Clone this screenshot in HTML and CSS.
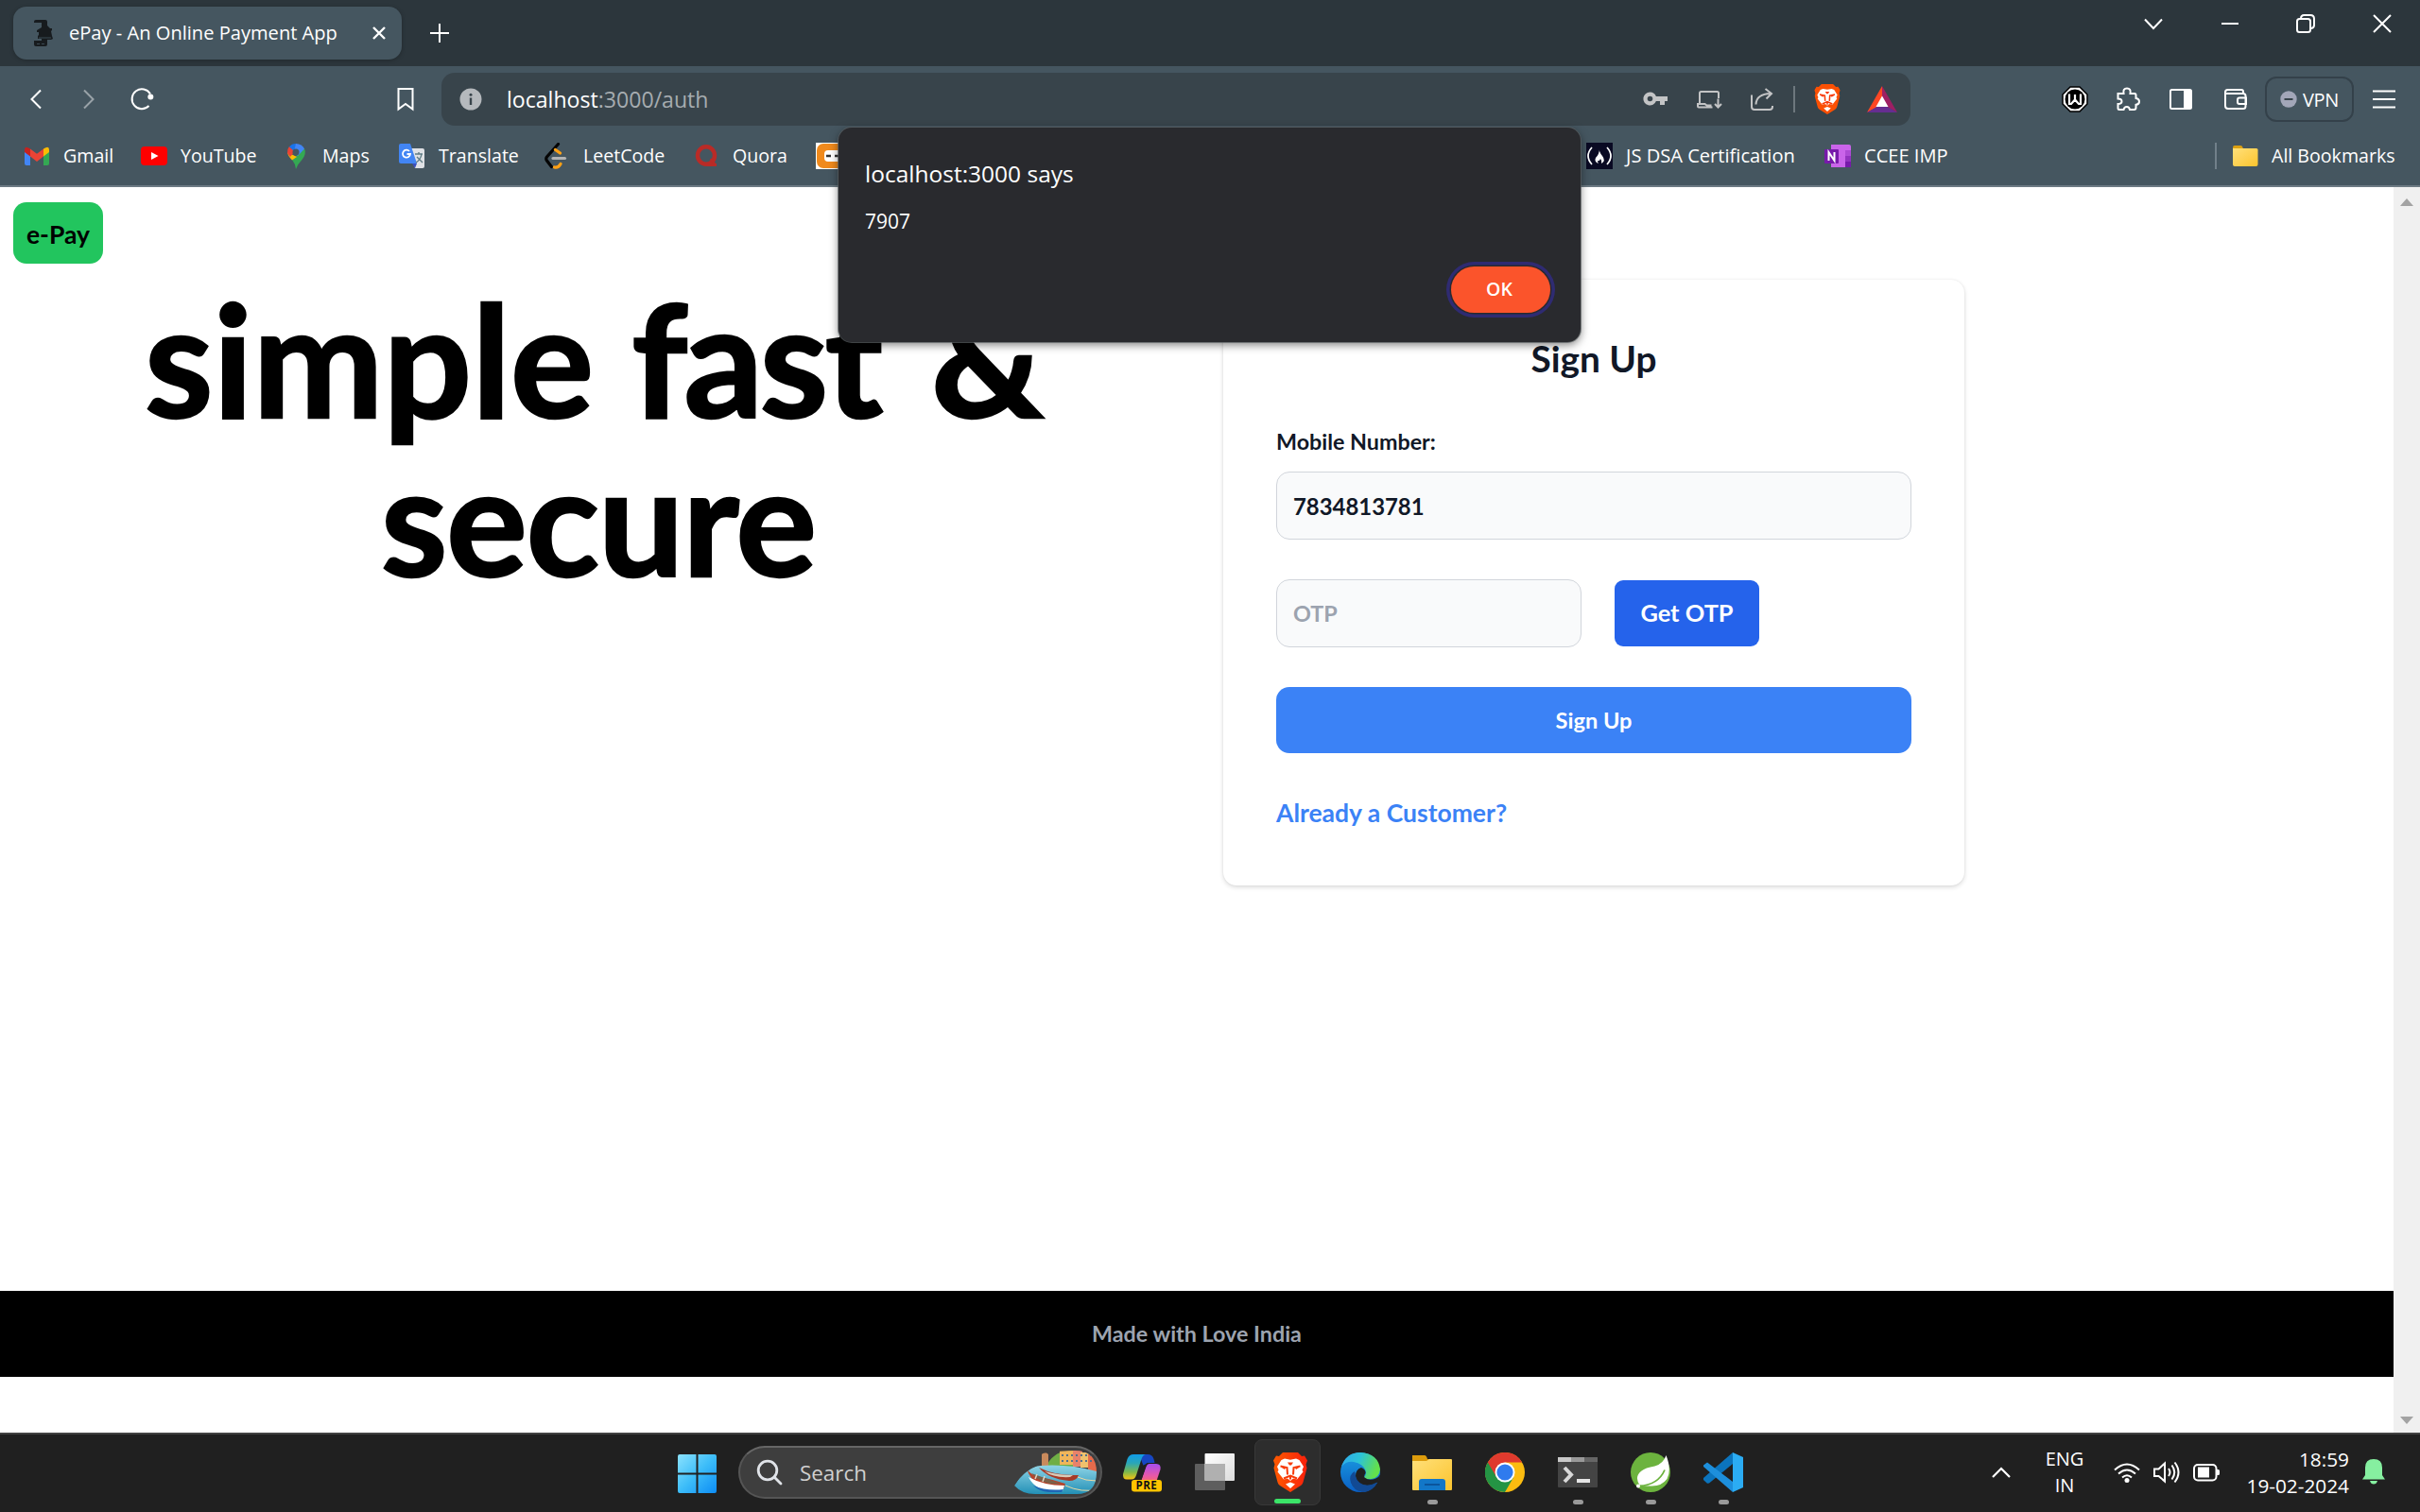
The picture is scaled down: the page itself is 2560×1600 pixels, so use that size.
FILE: index.html
```html
<!DOCTYPE html>
<html lang="en">
<head>
<meta charset="utf-8">
<title>ePay - An Online Payment App</title>
<link rel="stylesheet" href="styles.css">
</head>
<body>
<svg class="defs" width="0" height="0" aria-hidden="true">
  <defs>
    <linearGradient id="win" x1="0" y1="0" x2="1" y2="1"><stop offset="0" stop-color="#8be2fd"/><stop offset=".5" stop-color="#3dbdf9"/><stop offset="1" stop-color="#0c8cf4"/></linearGradient>
    <linearGradient id="lion" x1="0" y1="0" x2="1" y2="0"><stop offset="0" stop-color="#ff5a00"/><stop offset="1" stop-color="#f8200c"/></linearGradient>
    <linearGradient id="copA" x1="0" y1="0" x2="0" y2="1"><stop offset="0" stop-color="#0f9be8"/><stop offset=".35" stop-color="#2aa6b8"/><stop offset=".7" stop-color="#7cb84c"/><stop offset="1" stop-color="#f6c413"/></linearGradient>
    <linearGradient id="copB" x1="0" y1="0" x2="0" y2="1"><stop offset="0" stop-color="#a64df0"/><stop offset=".6" stop-color="#e858a8"/><stop offset="1" stop-color="#f9705c"/></linearGradient>
    <linearGradient id="edgeA" x1="0" y1="0" x2="1" y2=".3"><stop offset="0" stop-color="#2fa8ee"/><stop offset=".5" stop-color="#2cc3d6"/><stop offset="1" stop-color="#63e04d"/></linearGradient>
    <linearGradient id="edgeB" x1="0" y1="0" x2="0" y2="1"><stop offset="0" stop-color="#1b9de2"/><stop offset="1" stop-color="#0a5fc4"/></linearGradient>
    <linearGradient id="fold" x1="0" y1="0" x2="1" y2="1"><stop offset="0" stop-color="#ffe07a"/><stop offset="1" stop-color="#fcc42e"/></linearGradient>
    <linearGradient id="sea" x1="0" y1="0" x2="0" y2="1"><stop offset="0" stop-color="#8fd4e6"/><stop offset="1" stop-color="#2390b6"/></linearGradient>
    <linearGradient id="paper" x1="0" y1="0" x2="1" y2="1"><stop offset="0" stop-color="#ffffff"/><stop offset="1" stop-color="#dcdcdc"/></linearGradient>
    <symbol id="lionhead" viewBox="0 0 36 42">
      <path d="M10 0h16l4 4 3-.5 3 5-1.500 4 1 4-4 15q-.6 2-2.500 3.500L18 42 7 35q-2-1.500-2.500-3.500L.5 16.500l1-4L0 8.500l3-5 3 .5z"/>
      <path fill="#fff" d="M12 6.500l6 1.200 6-1.200 3.500 1.500 4.500 7-1.500 3.500 1 2-6.500 8-4-1-3 2.500-3-2.500-4 1-6.500-8 1-2L4 15l4.500-7zM18 31.500l5 2-5 4.500-5-4.500z"/>
      <path fill="none" stroke="#f83a08" stroke-width="2" d="M7.500 14.500l7 1.500.5 7.500M28.500 14.500l-7 1.500-.5 7.500M11 27.500l7-3 7 3M18 24.500v4"/>
      <path fill="#f83a08" d="M8 15.500l5 .5-1 2zM28 15.500l-5 .5 1 2zM15 10.500h6l-2 3h-2z"/>
    </symbol>
  </defs>
</svg>

<header class="browser">
  <div class="tabstrip">
    <div class="tab">
      <svg class="tab-icon" viewBox="0 0 22 28"><path fill="#171b1e" d="M1 2q0-2 2-2h10q2 0 2 2v4l3 3h2v2l-1 1 1 5 1 3-2 1h-4v5q0 2-2 2H3q-2 0-2-2v-4h8v-2H5v-3l1-1v-3H4v-2l5-3V3H1z"/><path stroke="#455660" stroke-width=".8" d="M4 25.500h3M9 25.500h3M6 19h13"/></svg>
      <span class="tab-title">ePay - An Online Payment App</span>
      <svg class="tab-close" viewBox="0 0 14 14"><path d="M1 1l12 12M13 1L1 13"/></svg>
    </div>
    <svg class="tab-new" viewBox="0 0 20 20"><path d="M10 0v20M0 10h20"/></svg>
    <div class="window-buttons">
      <svg class="ico" viewBox="0 0 28 28"><path d="M5 9.500l9 9.500 9-9.500"/></svg>
      <svg class="ico" viewBox="0 0 28 28"><path d="M5 14h18"/></svg>
      <svg class="ico" viewBox="0 0 28 28"><rect x="5" y="9" width="14" height="14" rx="2.500"/><path d="M9 8.500Q9 5 12.500 5H19q4 0 4 4v6.500q0 3-3 3.500"/></svg>
      <svg class="ico" viewBox="0 0 28 28"><path d="M5 5l18 18M23 5L5 23"/></svg>
    </div>
  </div>

  <div class="toolbar">
    <div class="nav">
      <svg class="ico" viewBox="0 0 28 28"><path d="M19 4.500L9.500 14l9.500 9.500"/></svg>
      <svg class="ico dim" viewBox="0 0 28 28"><path d="M9 4.500l9.500 9.500L9 23.500"/></svg>
      <svg class="ico" viewBox="0 0 28 28"><path d="M21.500 21A10.400 10.400 0 1 1 23 8.500"/><circle cx="23.300" cy="11.500" r="3" fill="#fff" stroke="none"/></svg>
    </div>
    <svg class="ico mark" viewBox="0 0 28 28"><path d="M6.500 3h15v21.500L14 19l-7.500 5.500z"/></svg>
    <div class="omnibox">
      <svg class="info" viewBox="0 0 24 24"><circle cx="12" cy="12" r="11.500" fill="#b5b9bd"/><path d="M12 10.500V18" stroke="#38444b" stroke-width="2.400"/><circle cx="12" cy="7.300" r="1.500" fill="#38444b"/></svg>
      <span class="url"><span class="host">localhost</span>:3000/auth</span>
      <div class="omni-actions">
        <svg class="ico gray" viewBox="0 0 28 28"><g fill="#c3c4c5" stroke="none"><path fill-rule="evenodd" d="M8.500 6.500a7 7 0 0 1 6.400 4.500H27v5h-3v4h-5v-4h-4.100A7 7 0 1 1 8.500 6.500zm0 4.200a2.800 2.800 0 1 0 0 5.600 2.800 2.800 0 0 0 0-5.600z"/></g></svg>
        <svg class="ico gray" viewBox="0 0 28 28"><path d="M4 19V7.500Q4 6 5.500 6h17Q24 6 24 7.500V13M17.500 22.500H3q-1 0-1-1V19h7.500l2 1.500h5M23.500 13.500V22M20 19l3.500 3.500L27 19"/></svg>
        <svg class="ico gray" viewBox="0 0 28 28"><path d="M3 9.500V22q0 3 3 3h16q3 0 3-3v-1M7.500 19.500Q8 8.500 23 8M17.500 3l6.500 5-5.500 5.500"/></svg>
        <span class="bar"></span>
        <svg class="shield" viewBox="0 0 36 42" fill="#fb5004"><use href="#lionhead"/></svg>
        <svg class="bat" viewBox="0 0 32 28"><path fill="#ff4724" d="M16 0L0 28l11-6 5-10z"/><path fill="#9e1f63" d="M16 0l16 28-11-6-5-10z"/><path fill="#662d91" d="M0 28h32l-10.500-6h-11z"/><path fill="#fff" d="M16 10.500L9.500 22h13z"/></svg>
      </div>
    </div>
    <div class="extensions">
      <svg class="ico" viewBox="0 0 28 28"><path d="M9 1h10l8 8v10l-8 8H9l-8-8V9z" fill="#fff" stroke="#000" stroke-width="1.500"/><circle cx="14" cy="14" r="10.500" fill="#000" stroke="none"/><path d="M8 8.500V19h2l4-4.500 4 4.500h2V8.500M14 9v5" stroke-width="2.200"/></svg>
      <svg class="ico" viewBox="0 0 28 28"><path d="M3.500 8h6q-1-5.500 3.500-5.500T16.500 8H21q1.500 0 1.500 1.500V13q3.500.5 3.500 3.500t-3.500 3.300V23q0 2-2 2h-4.500q-.5-3-3.200-3T9.500 25H5q-1.500 0-1.500-1.500V19q4 0 4-2.800T3.500 13.500z"/></svg>
      <svg class="ico" viewBox="0 0 28 28"><rect x="3" y="4" width="22" height="20" rx="1.500"/><path fill="#fff" stroke="none" d="M17 4h8v20h-8z"/></svg>
      <svg class="ico" viewBox="0 0 28 28"><path d="M22 8V6q0-2-2-2H5.500Q3 4 3 6.500V21q0 3 3 3h16q2.500 0 2.500-2.500v-11Q24.500 8 22 8H3M25 12.500h-7q-2 0-2 2v2.500q0 2 2 2h7z"/></svg>
      <div class="vpn"><svg viewBox="0 0 18 18"><circle cx="9" cy="9" r="8.700" fill="#a2a6b8"/><path d="M4.500 9h9" stroke="#38444b" stroke-width="2"/></svg>VPN</div>
      <svg class="ico" viewBox="0 0 28 28"><path d="M2 5.500h24M2 14h24M2 22.500h24"/></svg>
    </div>
  </div>

  <nav class="bookmarks">
    <a><svg viewBox="0 0 28 28"><path fill="#4285f4" d="M1 9l6 4.500V24H3q-2 0-2-2z"/><path fill="#34a853" d="M21 13.500L27 9v13q0 2-2 2h-4z"/><path fill="#fbbc04" d="M21 6.500q6-4 6 1V10l-6 4.500z"/><path fill="#c5221f" d="M1 10V7.500q0-5 6-1v8z"/><path fill="#ea4335" d="M7 6.500l7 5.300 7-5.300v8L14 20l-7-5.500z"/></svg>Gmail</a>
    <a><svg viewBox="0 0 28 28"><rect y="4" width="28" height="20" rx="4" fill="#f00"/><path fill="#fff" d="M11 10l7.500 4L11 18z"/></svg>YouTube</a>
    <a><svg viewBox="0 0 28 28"><path fill="#34a853" d="M14 28q-.7-6-4-10L23 6q2.500 6-2.500 12Q15.500 23 14 28z"/><path fill="#fbbc04" d="M10 18.500Q5.500 14 5 10l6 3 4 2z"/><path fill="#ea4335" d="M5 11q-.5-4 2-7l6 5-5 6z"/><path fill="#1a73e8" d="M7 4.300Q10 .5 15 1l-2 9z"/><path fill="#4285f4" d="M14 .9q6.500.3 9 5.600L16 14l-4-4z"/><circle cx="14" cy="10" r="3.500" fill="#455660"/></svg>Maps</a>
    <a><svg viewBox="0 0 28 28"><path fill="#dfe1e5" d="M12 6h13q2 0 2 2v17q0 2-2 2H17z"/><path fill="#4285f4" d="M2 1h10l7 21H2q-2 0-2-2V3q0-2 2-2z"/><path fill="#3a4fbe" d="M14 22h5l-2 5z"/><path d="M17 12h8M21 10v2M24 12q-1 6-6 9M19 15l6 6" stroke="#5f7c85" stroke-width="1.400" fill="none"/><path d="M11 9a4 4 0 1 0 1 3H8.500" stroke="#fff" stroke-width="1.800" fill="none"/></svg>Translate</a>
    <a><svg viewBox="0 0 28 28" fill="none" stroke-width="3.200" stroke-linecap="round"><path stroke="#050505" d="M15.500 1.500L3.500 15q-1.500 2 0 4l5 6.500"/><path stroke="#ffa116" d="M12.500 7.500l5 3.500M11.500 26q4 1 6.500-3.500"/><path stroke="#b3b3b3" d="M10 16.500h12.500"/></svg>LeetCode</a>
    <a><svg viewBox="0 0 28 28" fill="none" stroke="#b92b27" stroke-width="4.500"><ellipse cx="14" cy="13.500" rx="9" ry="9.200"/><path stroke-width="3" d="M15 23.500h10M19 17l4 6"/></svg>Quora</a>
    <a><svg viewBox="0 0 28 28"><path fill="#fff" d="M0 0h28v28H0z"/><rect x="1" y="1" width="30" height="26" rx="7" fill="#f08a1c"/><rect x="9" y="8" width="24" height="12" rx="4" fill="#fff"/><path stroke="#333" stroke-width="2.500" d="M11 14h5M20 14h5"/></svg></a>
    <a class="wide"><svg viewBox="0 0 28 28"><path fill="#0a0a23" d="M0 0h28v28H0z"/><path d="M6 5q-8 9 0 18M22 5q8 9 0 18" stroke="#fff" stroke-width="1.700" fill="none"/><path fill="#fff" d="M14 6q-1 3 3 8 4 5-1 8 1-3-1-5-1 3-3 2 0 2 1 3-5-2-3-6 4-4 4-10z"/></svg>JS DSA Certification</a>
    <a class="wide"><svg viewBox="0 0 28 28"><path fill="#ca64ea" d="M7 2h19q2 0 2 2v22H7z"/><path fill="#ae4bd5" d="M22 8h6v6h-6z"/><path fill="#9332bf" d="M22 14h6v6h-6z"/><path fill="#7719aa" d="M22 20h6v6h-6zM1 7h13q1 0 1 1v13q0 1-1 1H1q-1 0-1-1V8q0-1 1-1z"/><path d="M4.500 19v-9l6 9v-9" stroke="#fff" stroke-width="2" fill="none"/></svg>CCEE IMP</a>
    <a class="all"><svg viewBox="0 0 28 28"><path fill="#dba011" d="M1 5q0-2 2-2h6q2 0 2.500 2l1 3H1z"/><path fill="url(#fold)" d="M1 6h25q1.500 0 1.500 1.500V23q0 2-2 2H3q-2 0-2-2z"/></svg>All Bookmarks</a>
  </nav>
</header>

<div class="viewport">
  <div class="page">
    <div class="topbar"><a class="logo">e-Pay</a></div>
    <main class="columns">
      <h1 class="hero"><span class="line-one">simple <span class="tight">fast</span> &amp;</span><br><span class="line-two">secure</span></h1>
      <form class="card">
        <h2>Sign Up</h2>
        <label>Mobile Number:</label>
        <div class="field">7834813781</div>
        <div class="otp-row">
          <div class="field hint">OTP</div>
          <div class="get-otp">Get OTP</div>
        </div>
        <div class="submit">Sign Up</div>
        <a class="switch">Already a Customer?</a>
      </form>
    </main>
    <footer class="footer">Made with Love India</footer>
  </div>
  <div class="scrollbar">
    <svg viewBox="0 0 14 8"><path d="M7 0l7 8H0z"/></svg>
    <svg viewBox="0 0 14 8"><path d="M0 0h14L7 8z"/></svg>
  </div>
</div>

<div class="dialog">
  <p class="dialog-title">localhost:3000 says</p>
  <p class="dialog-text">7907</p>
  <div class="dialog-ok">OK</div>
</div>

<div class="taskbar">
  <div class="apps">
    <svg class="start" viewBox="0 0 41 41"><path fill="url(#win)" d="M2 0h17.500v19.500H0V2q0-2 2-2zM21.500 0H39q2 0 2 2v17.500H21.500zM0 21.500h19.500V41H2q-2 0-2-2zM21.500 21.500H41V39q0 2-2 2H21.500z"/></svg>
    <div class="search">
      <svg class="lens" viewBox="0 0 28 28"><circle cx="12" cy="12" r="9.800"/><path d="M19 19l7 7"/></svg>
      <span>Search</span>
      <svg class="harbor" viewBox="0 0 87 46">
        <defs><clipPath id="hc"><path d="M0 37Q9 22 26 15L29 3Q50 0 64 0 87 0 87 23T66 46H22Q8 46 0 37z"/></clipPath></defs>
        <g clip-path="url(#hc)">
          <path fill="#6fae45" d="M34 18q2-8 8-12 6-6 20-5v17z"/>
          <path fill="#c98a5c" d="M29 4l3.500-3L36 4v12h-7z"/>
          <path fill="#f0b65a" d="M48 0h15v15H48z"/><path fill="#e8826a" d="M62 0h10v17H62z"/><path fill="#efc16d" d="M70 2h9v16h-9z"/><path fill="#e46b4c" d="M78 4h9v18h-9z"/>
          <path stroke="#53708c" stroke-width="2" stroke-dasharray="2 3" d="M50 5h36M50 11h36"/>
          <path fill="url(#sea)" d="M0 37Q12 17 28 16q30-2 59 6v24H0z"/>
          <path fill="#a63a28" d="M26 18q18 9 42 8-2 6-10 6-22-2-32-14z"/><path fill="#d8cbb9" d="M32 22q14 4 30 4l-3 2q-18 1-27-6z"/>
          <path fill="#b5442c" d="M13 19q5 8 15 9 14 3 26 7l-2 6Q20 42 13 19z"/><path fill="#fff" d="M15 28q16 9 38 9l-2 6Q24 46 15 28z"/><path fill="#1f66b5" d="M20 37q14 6 32 4l-2 3H36q-10-1-16-7z"/>
          <path fill="#7c6048" d="M18 24q14 5 31 11-20 2-31-11z"/><path d="M24 25l-2 5M32 27l-2 6" stroke="#e2d6c5" stroke-width="1.500"/>
          <path d="M54 37q18 8 33 4M67 28q8 4 20 4" stroke="#e9d9a4" fill="none"/>
        </g>
      </svg>
    </div>
    <div class="app"><svg viewBox="0 0 42 42"><path fill="#1746c2" d="M18 2h9q5 0 6.500 5l1 4h-8l-4 3z"/><path fill="url(#copA)" d="M12 2h13q-3 .5-4.500 5L15 24q-1.500 4.500-5 4.500H5Q.5 28.500 1 23L5.500 7Q7.500 2 12 2z"/><path fill="url(#copB)" d="M29 12h7q5.500 0 4.500 6l-4 12q-1 3-5 3H19l6-17q1.500-4 4-4z"/><path fill="#202020" d="M19 18l4-5h3l-5.500 16H13q3-1 4-5z"/><rect x="10" y="29" width="32" height="12.500" rx="3" fill="#ffc400"/></svg><span class="pre">PRE</span></div>
    <div class="app"><svg viewBox="0 0 42 42"><rect y="12" width="32" height="28" rx="1" fill="#5e5e5e"/><rect x="10.500" y="1" width="31.500" height="29" rx="1" fill="url(#paper)"/><path fill="#b0b0b0" d="M10.500 12H32v18H10.500z"/></svg></div>
    <div class="app active"><svg viewBox="0 0 42 42"><svg x="3" width="36" height="42" viewBox="0 0 36 42" fill="url(#lion)"><use href="#lionhead"/></svg></svg></div>
    <div class="app"><svg viewBox="0 0 42 42"><circle cx="21" cy="21" r="21" fill="url(#edgeB)"/><path fill="#124a94" d="M15 20q-7 4-4 12 4 8 14 10 9-1 14-10-6 3-13 1-10-3-11-13z"/><path fill="url(#edgeA)" d="M1 15Q6 0 21 0q19 1 21 18-1 9-9 10-7 1-8-2 3-3 1.500-7Q24 12 14 10 6 9 1 15z"/><path fill="#202020" d="M16 25q0-7 6-9 5 2 4.500 6-2 3-1 4.500 5 4 12 1 3-1 5-5-1 6-3 9-10 5-18 2-5-3-5.500-8.500z"/><path fill="#124a94" d="M16 25q2 9 13 10 5 0 10-3-5 8-14 10-12-1-14-11z"/></svg></div>
    <div class="app open"><svg viewBox="0 0 42 42"><path fill="#dd9c0c" d="M0 3h13q2 0 3 4h8v8H0z"/><path fill="url(#fold)" d="M0 9h15l3-2h23q1 0 1 1v31q0 1-1 1H1q-1 0-1-1z"/><path fill="#1277c8" d="M7 40V31q0-3 3-3h22q3 0 3 3v9z"/><path stroke="#0b549c" stroke-width="2" d="M13 34h16"/></svg></div>
    <div class="app"><svg viewBox="0 0 42 42"><circle cx="21" cy="21" r="21" fill="#fbbc10"/><path fill="#249444" d="M2.800 10.500A21 21 0 0 0 21 42l9-15.500L21 21z"/><path fill="#df3a2e" d="M2.800 10.500A21 21 0 0 1 39.200 10.500H21L12 26z"/><circle cx="21" cy="21" r="10.500" fill="#fff"/><circle cx="21" cy="21" r="8.600" fill="#2f7bee"/></svg></div>
    <div class="app open"><svg viewBox="0 0 42 42"><rect y="5" width="42" height="32" rx="1" fill="#444"/><path fill="#c8c8c8" d="M0 5h14v5H0z"/><path fill="#999" d="M14 5h14v5H14z"/><path fill="#666" d="M28 5h14v5H28z"/><path d="M7 16l7 7.500L7 31" stroke="#d8d8d8" stroke-width="4" fill="none"/><path fill="#e6e6e6" d="M20 28h14v4H20z"/></svg></div>
    <div class="app open"><svg viewBox="0 0 42 42"><circle cx="21" cy="21" r="21" fill="#6cb33e"/><path fill="#fff" d="M37.500 3q6 15 1 25-6 8-17 7.500-8 0-12-1-6-9 2-15 4-3.500 14-5 9-2.500 12-11.500z"/><path d="M9 35.500q20-1 27-17" stroke="#6cb33e" stroke-width="1.800" fill="none"/><circle cx="8" cy="35.500" r="2" fill="#fff"/></svg></div>
    <div class="app open"><svg viewBox="0 0 42 42"><path fill="#0b74bd" d="M31 0v12L6 32.500l-2 .2L0 29v-2z"/><path fill="#1d8fdc" d="M4 10.500L31 31v11L0 15v-1.500z"/><path fill="#2bacf3" d="M31 0l11 5v32l-11 5z"/></svg></div>
  </div>
  <div class="tray">
    <svg class="up" viewBox="0 0 20 12"><path d="M1 11l9-9 9 9"/></svg>
    <div class="lang">ENG<br>IN</div>
    <svg class="sys" viewBox="0 0 28 28"><path d="M1 11.500q13-12 26 0M5 15.500q9-8 18 0M9 19.500q5-4.500 10 0"/><circle cx="14" cy="22.500" r="2.500" fill="#fff" stroke="none"/></svg>
    <svg class="sys" viewBox="0 0 28 28"><path d="M1 10.500h4.500L12 4.500v19l-6.500-5.500H1zM16 10q3 4 0 8M19.500 6.500q5.500 7.500 0 15M22.500 3.500q8 10.500 0 21"/></svg>
    <svg class="sys" viewBox="0 0 28 28"><rect x="1" y="6" width="23.500" height="16.500" rx="4"/><path fill="#fff" stroke="none" d="M5 8.500h12v11H5zM25 11h1.500q1.500 0 1.500 1.500v3q0 1.500-1.500 1.500H25z"/></svg>
    <div class="clock">18:59<br>19-02-2024</div>
    <svg class="bell" viewBox="0 0 24 27"><path d="M12 0q9 0 9 9v8l3 4.500H0L3 17V9q0-9 9-9zM8 23h8q-1 3.500-4 3.500T8 23z"/></svg>
  </div>
</div>
</body>
</html>
```

FILE: styles.css
```css
* { box-sizing: border-box; margin: 0; padding: 0; }

body {
  width: 2560px;
  height: 1600px;
  display: flex;
  flex-direction: column;
  position: relative;
  overflow: hidden;
  background: #fff;
  font-family: "Open Sans", "Noto Sans", sans-serif;
}

.defs { position: absolute; }
svg { display: block; flex: none; }

.ico { width: 28px; height: 28px; fill: none; stroke: #fff; stroke-width: 2; }
.ico.gray { stroke: #c3c4c5; }
.ico.dim { opacity: .45; }

/* Browser frame */
.browser { flex: none; height: 198px; background: #455660; border-bottom: 2px solid #6c7a83; color: #fff; }

.tabstrip { height: 70px; display: flex; align-items: center; padding-left: 14px; background: #2c363c; }
.tab { width: 411px; height: 56px; border-radius: 14px; background: #455660; display: flex; align-items: center; padding: 0 17px 0 21px; box-shadow: 0 1px 4px rgba(0, 0, 0, .25); }
.tab-icon { width: 22px; height: 28px; margin-right: 16px; }
.tab-title { flex: 1; font-size: 20.1px; white-space: nowrap; padding-bottom: 1px; }
.tab-close { width: 14px; height: 14px; fill: none; stroke: #fff; stroke-width: 2.4; }
.tab-new { width: 20px; height: 20px; margin-left: 30px; stroke: #fff; stroke-width: 2; }
.window-buttons { margin-left: auto; height: 70px; padding-top: 11px; display: grid; grid-template-columns: repeat(4, 80.5px); justify-items: center; }

.toolbar { height: 70px; display: flex; align-items: center; }
.nav { display: flex; padding-left: 24px; gap: 28px; }
.mark { margin-left: 251px; }
.omnibox { margin-left: 24px; width: 1554px; height: 56px; border-radius: 14px; background: #38444b; display: flex; align-items: center; padding-left: 19px; }
.info { width: 24px; height: 24px; }
.url { margin-left: 26px; font-size: 23.1px; color: #a6acb0; letter-spacing: 0; padding-bottom: 1px; }
.host { color: #fff; }
.omni-actions { margin-left: auto; display: grid; grid-template-columns: 56px 57px 56px 12px 57px 60px; align-items: center; justify-items: center; }
.bar { width: 2px; height: 28px; background: #6d777d; }
.shield { width: 28px; height: 32px; }
.bat { width: 32px; height: 28px; }
.extensions { margin-left: auto; display: grid; grid-template-columns: 55px 56px 56px 60px 94px 64px; align-items: center; justify-items: center; padding-right: 6px; }
.extensions > .ico:not(:last-child) { margin-right: 3px; }
.vpn { width: 94px; height: 48px; border: 2px solid #34414a; border-radius: 12px; display: flex; align-items: center; justify-content: center; gap: 6px; font-size: 20px; letter-spacing: -.3px; }
.vpn svg { width: 18px; height: 18px; }

.bookmarks { height: 50px; padding-left: 25px; display: grid; grid-template-columns: 124px 150px 123px 153px 158px 130px 815px 252px 413px 1fr; align-items: center; }
.bookmarks a { display: flex; align-items: center; height: 28px; line-height: 26px; gap: 14px; font-size: 19.6px; white-space: nowrap; }
.bookmarks .wide { font-size: 20.1px; }
.bookmarks svg { width: 28px; height: 28px; }
.all { height: 28px; border-left: 2px solid #71808a; padding-left: 16px; }

/* Web page */
.viewport { flex: 1; display: flex; min-height: 0; }
.page { width: 2532px; display: flex; flex-direction: column; font-family: Lato, "Open Sans", sans-serif; font-weight: 700; }
.topbar { padding: 16px 14px 0; }
.logo { display: inline-flex; align-items: center; justify-content: center; width: 95px; height: 65px; border-radius: 14px; background: #22c55e; color: #000; font-size: 26.5px; padding-top: 2px; }
.columns { height: 1087px; display: grid; grid-template-columns: 1266px 1fr; align-items: start; }
.hero { padding: 15px 0 0 0; text-align: center; font-size: 164.9px; line-height: 168px; color: #000; -webkit-text-stroke: 2.5px #000; }
.line-one { padding-right: 9px; }
.tight { letter-spacing: -3.500px; margin-right: 14px; }
.line-two { font-size: 160px; letter-spacing: -1px; }
.card { margin: 17px 0 0 28px; width: 784px; height: 641px; border-radius: 14px; padding: 56px; background: #fff; box-shadow: 0 2px 5px rgba(0, 0, 0, .14), 0 0 2px rgba(0, 0, 0, .08); color: #111827; display: flex; flex-direction: column; }
.card h2 { text-align: center; font-size: 38.8px; line-height: 55px; height: 56px; }
.card label { margin-top: 42px; font-size: 23.3px; line-height: 35px; }
.field { margin-top: 14px; height: 72px; border: 1.5px solid #d1d5db; border-radius: 14px; background: #f9fafb; padding: 0 17px; font-size: 23.9px; line-height: 71px; }
.hint { margin: 0; width: 323px; color: #9ca3af; font-size: 23.4px; }
.otp-row { margin-top: 42px; display: flex; align-items: center; gap: 35px; }
.get-otp { width: 153px; height: 70px; border-radius: 9px; background: #2563eb; color: #fff; text-align: center; font-size: 25.4px; line-height: 69px; }
.submit { margin-top: 42px; height: 70px; border-radius: 14px; background: #3b82f6; color: #fff; text-align: center; font-size: 23.6px; line-height: 70px; }
.switch { margin-top: 42px; color: #3b82f6; font-size: 26.5px; line-height: 42px; }
.footer { height: 91px; background: #000; color: #9ca3af; text-align: center; font-size: 23.3px; line-height: 91px; }

.scrollbar { width: 28px; background: #f0f0f0; display: flex; flex-direction: column; justify-content: space-between; align-items: center; padding: 12px 0 9px; }
.scrollbar svg { width: 14px; height: 8px; fill: #a3a3a3; }

/* Alert dialog */
.dialog { position: absolute; left: 887px; top: 135px; width: 785px; height: 227px; border-radius: 14px; background: #292a2e; color: #fff; box-shadow: 0 0 0 1px rgba(90, 95, 98, .7), 0 3px 10px rgba(0, 0, 0, .5); padding: 29px 29px 29px 28px; display: flex; flex-direction: column; }
.dialog-title { font-size: 24.5px; line-height: 40px; }
.dialog-text { margin-top: 15px; font-size: 21px; line-height: 30px; }
.dialog-ok { margin: 33px 3px 0 auto; flex: none; width: 105px; height: 49px; border-radius: 25px; background: #fb542b; box-shadow: 0 0 0 1.5px #292a2e, 0 0 0 5px #2f2b72; text-align: center; font-size: 19.5px; font-weight: 600; line-height: 48px; padding-right: 3px; }

/* Taskbar */
.taskbar { flex: none; height: 84px; background: #202020; border-top: 2px solid #424242; display: flex; justify-content: space-between; color: #fff; }
.apps { display: flex; align-items: center; padding: 0 0 2px 717px; }
.start { width: 41px; height: 41px; margin-top: 2px; }
.search { margin: 0 0 0 23px; width: 385px; height: 56px; border-radius: 28px; background: #3e3e3e; border: 2px solid #555; border-top-color: #666; display: flex; align-items: center; padding: 0 4px 0 17px; font-size: 22.4px; color: #d0d0d0; }
.lens { width: 28px; height: 28px; margin-right: 18px; fill: none; stroke: #e0e3e8; stroke-width: 2.8; stroke-linecap: round; }
.harbor { width: 87px; height: 46px; margin-left: auto; }
.app { width: 70px; height: 70px; margin-left: 6.9px; border-radius: 8px; display: flex; align-items: center; justify-content: center; position: relative; }
.app svg { width: 42px; height: 42px; }
.app.active { background: #2d2d2d; border: 1.5px solid #383838; }
.app.active::after, .app.open::after { content: ""; position: absolute; bottom: 1px; left: 50%; width: 11px; height: 5px; margin-left: -5.5px; border-radius: 3px; background: #9a9a9a; }
.app.active::after { width: 28px; margin-left: -14px; background: #3be468; }
.pre { position: absolute; left: 24px; top: 42px; width: 32px; text-align: center; font-size: 11.5px; font-weight: 700; line-height: 14px; letter-spacing: .5px; color: #111; }
.tray { display: flex; align-items: center; padding: 0 37px 3px 0; font-size: 20px; line-height: 28px; }
.up { width: 20px; height: 12px; fill: none; stroke: #fff; stroke-width: 2.2; }
.lang { width: 60px; margin: 0 22px 0 27px; text-align: center; }
.sys { width: 28px; height: 28px; margin-right: 14px; fill: none; stroke: #fff; stroke-width: 2; }
.clock { width: 123px; text-align: right; font-size: 20.8px; }
.bell { width: 24px; height: 27px; margin-left: 14px; fill: #86efa0; }
```
